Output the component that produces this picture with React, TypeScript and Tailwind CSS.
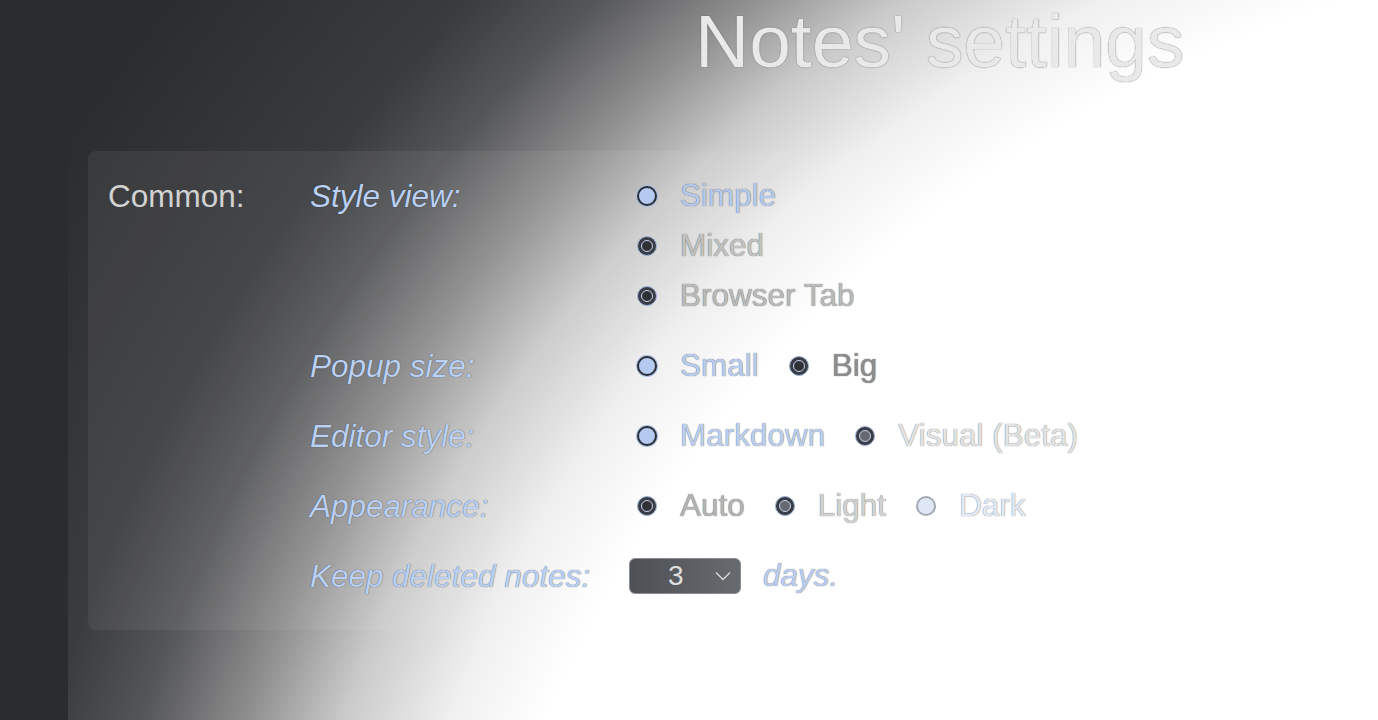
import type { ReactNode } from 'react';

type Tone = 'on' | 'off' | 'offSoft' | 'faded';

interface Option {
  label: string;
  tone: Tone;
  text: string;
}

const outline = '[text-shadow:0_0_1px_rgba(20,22,26,0.75)]';

function Radio({ tone }: { tone: Tone }) {
  if (tone === 'on') {
    return (
      <span className="block h-5 w-5 shrink-0 rounded-full border-2 border-[#2c2e33] bg-[#b5caf1] shadow-[0_0_0_1px_#a8bde4]" />
    );
  }
  if (tone === 'faded') {
    return <span className="block h-5 w-5 shrink-0 rounded-full border-2 border-[#a3a9b4] bg-[#dfe7f7]" />;
  }
  const dot = tone === 'offSoft' ? 'bg-[#66696f]' : 'bg-[#2f3136]';
  return (
    <span className="flex h-5 w-5 shrink-0 items-center justify-center rounded-full border-[1.5px] border-[#9cb2da] bg-[#3a3d43]">
      <span className={`block h-[12px] w-[12px] rounded-full border border-[#c3d3f0] ${dot}`} />
    </span>
  );
}

function OptionItem({ option }: { option: Option }) {
  return (
    <label className="flex h-[50px] items-center gap-[23px]">
      <Radio tone={option.tone} />
      <span className={`${option.text} ${outline}`}>{option.label}</span>
    </label>
  );
}

function Row({ label, children }: { label: string; children: ReactNode }) {
  return (
    <div className="flex">
      <div className={`h-[50px] w-[319px] shrink-0 leading-[50px] italic text-[#bad0f4] ${outline}`}>{label}</div>
      <div className="flex-1">{children}</div>
    </div>
  );
}

export default function App() {
  return (
    <div className="flex min-h-[720px] bg-[#2b2c2f] font-['Liberation_Sans',Arial,sans-serif]">
      <aside className="w-[68px] shrink-0 bg-[#2b2c2f]" />

      <main className="min-h-[720px] flex-1 bg-[radial-gradient(circle_at_1632px_1200px,#ffffff_0px,#ffffff_1250px,#f0f0f0_1340px,#cacaca_1440px,#8f8f90_1530px,#555658_1630px,#3a3b3e_1720px,#2b2c2f_1950px)]">
        {/* Header */}
        <h1 className={`h-[151px] pl-[627px] pt-[4px] text-[75px] leading-none text-[#e9e9e9] ${outline}`}>
          Notes' settings
        </h1>

        {/* Settings panel */}
        <section className="ml-[20px] flex w-[1202px] rounded-lg bg-white/[0.06] pb-[29px] pl-[20px] pt-[20px] text-[31.5px]">
          <div className="h-[50px] w-[202px] shrink-0 leading-[50px] text-[#d2d2d2]">Common:</div>

          <div className="flex flex-1 flex-col gap-[20px]">
            <Row label="Style view:">
              <div className="pl-[8px]">
                <OptionItem option={{ label: 'Simple', tone: 'on', text: 'text-[#b6caee]' }} />
                <OptionItem option={{ label: 'Mixed', tone: 'off', text: 'text-[#c2c2c2]' }} />
                <OptionItem option={{ label: 'Browser Tab', tone: 'off', text: 'text-[#bababa]' }} />
              </div>
            </Row>

            <Row label="Popup size:">
              <div className="flex gap-[30px] pl-[8px]">
                <OptionItem option={{ label: 'Small', tone: 'on', text: 'text-[#b9ccee]' }} />
                <OptionItem option={{ label: 'Big', tone: 'off', text: 'text-[#8e8e8e]' }} />
              </div>
            </Row>

            <Row label="Editor style:">
              <div className="flex gap-[30px] pl-[8px]">
                <OptionItem option={{ label: 'Markdown', tone: 'on', text: 'text-[#bccff0]' }} />
                <OptionItem option={{ label: 'Visual (Beta)', tone: 'offSoft', text: 'text-[#e4e4e4]' }} />
              </div>
            </Row>

            <Row label="Appearance:">
              <div className="flex gap-[30px] pl-[8px]">
                <OptionItem option={{ label: 'Auto', tone: 'off', text: 'text-[#b4b4b4]' }} />
                <OptionItem option={{ label: 'Light', tone: 'offSoft', text: 'text-[#d2d2d2]' }} />
                <OptionItem option={{ label: 'Dark', tone: 'faded', text: 'text-[#e3e9f6]' }} />
              </div>
            </Row>

            <Row label="Keep deleted notes:">
              <div className="flex h-[50px] items-center gap-[22px]">
                <div className="flex h-[36px] w-[112px] items-center justify-between rounded-md border border-[#8c9096] bg-[linear-gradient(90deg,#4d5055,#676a6e)] pl-[38px] pr-[9px]">
                  <span className="text-[28px] leading-none text-[#dedede]">3</span>
                  <svg width="16" height="10" viewBox="0 0 16 10" fill="none" stroke="#d8d8d8" strokeWidth="1.4">
                    <path d="M1 1.5 L8 8.5 L15 1.5" />
                  </svg>
                </div>
                <span className={`italic text-[#bccdf0] ${outline}`}>days.</span>
              </div>
            </Row>
          </div>
        </section>
      </main>
    </div>
  );
}
